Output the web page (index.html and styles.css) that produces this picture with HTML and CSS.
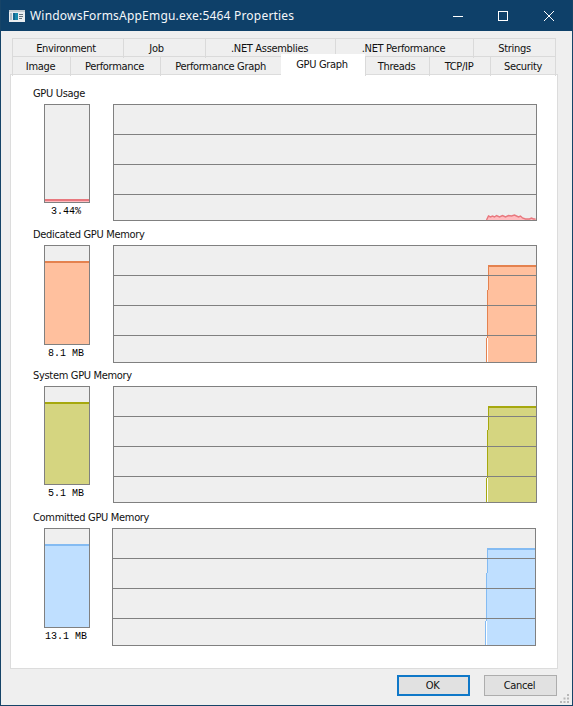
FILE: index.html
```
<!DOCTYPE html>
<html lang="en">
<head>
<meta charset="utf-8">
<title>WindowsFormsAppEmgu.exe:5464 Properties</title>
<link rel="stylesheet" href="styles.css">
</head>
<body>
<div class="window">
  <header class="titlebar">
    <svg class="app-icon" width="16" height="12" viewBox="0 0 16 12">
      <rect width="16" height="12" fill="#e9edf0"/><rect width="16" height="2" fill="#c3cbd0"/>
      <rect x="1" y="3" width="2" height="7" fill="#b4c0c8"/>
      <rect x="4" y="3" width="5" height="7" fill="#1788ac"/><rect x="4" y="3" width="2" height="7" fill="#13658f"/>
      <path d="M10 4.5h4M10 6.5h4M10 8.5h3" stroke="#66747d"/>
    </svg>
    <h1>WindowsFormsAppEmgu.exe:5464 Properties</h1>
    <svg class="controls" width="102" height="12" viewBox="0 0 102 12" fill="none" stroke="#fff">
      <path d="M0 6.500h10"/><rect x="45.500" y="1.500" width="9" height="9"/><path d="M91 1l10 10M101 1l-10 10"/>
    </svg>
  </header>
  <nav class="tabs">
    <div class="row upper"><span>Environment</span><span>Job</span><span>.NET Assemblies</span><span>.NET Performance</span><span>Strings</span></div>
    <div class="row lower"><span>Image</span><span>Performance</span><span>Performance Graph</span><span class="active">GPU Graph</span><span>Threads</span><span>TCP/IP</span><span>Security</span></div>
  </nav>
  <main class="panel">
    <section class="usage">
      <h2>GPU Usage</h2>
      <div class="gauge"><div class="meter"><i></i></div><p>3.44%</p></div>
      <svg class="graph" width="424" height="117" viewBox="0 0 424 117">
        <rect class="frame" x=".5" y=".5" width="423" height="116"/>
        <path class="fill" d="M374 116v-3l2-1h30l6 3h11v1z"/>
        <path class="grid" d="M1 30.5h422M1 60.5h422M1 90.5h422"/>
        <path class="line" d="M373.5 116l2-4 2 1 2-1 2 1 2-1.500 3 1.500 3-1.500 3 1.500 3-1.500 3 .5 3-1 4 2 2-1 2 2 3 1h4l2-1 2 1h2"/>
      </svg>
    </section>
    <section class="dedicated">
      <h2>Dedicated GPU Memory</h2>
      <div class="gauge tall"><div class="meter"><i></i></div><p>8.1 MB</p></div>
      <svg class="graph" width="424" height="118" viewBox="0 0 424 118">
        <rect class="frame" x=".5" y=".5" width="423" height="117"/>
        <path class="fill" d="M375 20h48v97h-48z"/><path class="gap" d="M374.500 93v24"/>
        <path class="edge" d="M375.500 20v25M374.500 45v48M373.500 93v24"/><path class="line" d="M375 21h48"/>
        <path class="grid" d="M1 30.5h422M1 60.5h422M1 90.5h422"/>
      </svg>
    </section>
    <section class="system">
      <h2>System GPU Memory</h2>
      <div class="gauge"><div class="meter"><i></i></div><p>5.1 MB</p></div>
      <svg class="graph" width="424" height="117" viewBox="0 0 424 117">
        <rect class="frame" x=".5" y=".5" width="423" height="116"/>
        <path class="fill" d="M375 20h48v96h-48z"/><path class="gap" d="M374.500 92v24"/>
        <path class="edge" d="M375.500 20v24M374.500 44v48M373.500 92v24"/><path class="line" d="M375 21h48"/>
        <path class="grid" d="M1 30.5h422M1 60.5h422M1 90.5h422"/>
      </svg>
    </section>
    <section class="committed">
      <h2>Committed GPU Memory</h2>
      <div class="gauge tall"><div class="meter"><i></i></div><p>13.1 MB</p></div>
      <svg class="graph" width="424" height="118" viewBox="0 0 424 118">
        <rect class="frame" x=".5" y=".5" width="423" height="117"/>
        <path class="fill" d="M375 20h48v97h-48z"/><path class="gap" d="M374.500 93v24"/>
        <path class="edge" d="M375.500 20v25M374.500 45v48M373.500 93v24"/><path class="line" d="M375 21h48"/>
        <path class="grid" d="M1 30.5h422M1 60.5h422M1 90.5h422"/>
      </svg>
    </section>
  </main>
  <footer>
    <button class="primary">OK</button><button>Cancel</button>
    <svg class="grip" width="9" height="9" viewBox="0 0 9 9"><path fill="#b8b8b8" d="M7 0h2v2h-2zM3.500 3.500h2v2h-2zM7 3.500h2v2h-2zM0 7h2v2h-2zM3.500 7h2v2h-2zM7 7h2v2h-2z"/></svg>
  </footer>
</div>
</body>
</html>
```
FILE: styles.css
```
* { box-sizing: border-box; }
body { margin: 0; font: 11px/16px "DejaVu Sans Condensed", "DejaVu Sans", sans-serif; font-stretch: condensed; letter-spacing: -.32px; color: #111; }
h1, h2, p { margin: 0; font-weight: normal; }
svg { display: block; }
.window { width: 573px; height: 706px; background: #efefef; border: 1px solid #164468; border-top: 0; overflow: hidden; }
.titlebar { height: 31px; margin: 0 -1px; padding: 0 18px 0 9px; display: flex; align-items: center; background: #0e4069; }
.titlebar h1 { margin-left: 5px; font: 12px/20px "Noto Sans", sans-serif; letter-spacing: .2px; color: #f4f7fa; white-space: nowrap; }
.controls { margin-left: auto; }
.tabs { margin: 7px 0 0 11px; width: 544px; }
.row { display: grid; height: 18px; }
.row span { padding-right: 2px; border: 1px solid #dadada; border-width: 1px 0 0 1px; line-height: 19px; text-align: center; white-space: nowrap; }
.row span:last-child { border-right-width: 1px; padding-right: 0; }
.upper { grid-template-columns: 111px 82px 130px 138px 83px; }
.upper span:nth-child(1) { padding-right: 4px; }
.upper span:nth-child(2) { padding-right: 16px; }
.lower { grid-template-columns: 58px 90px 121px 84px 64px 61px 66px; }
.lower span:nth-child(3) { padding-right: 0; }
.lower span:nth-child(3) { text-indent: -1px; }
.lower span.active { background: #fff; height: 21px; margin-top: -2px; border-color: #fff; z-index: 1; line-height: 19px; padding-right: 3px; }
.panel { width: 548px; height: 595px; margin-left: 9px; padding: 12px 0 0 22px; background: #fff; border: 1px solid #dcdcdc; }
section { height: 141px; display: grid; grid-template: 17px 1fr / 80px 424px; }
section h2 { grid-column: 1 / 3; font-size: 11px; line-height: 14px; }
.system { height: 142px; }
.gauge { margin-left: 11px; width: 46px; }
.meter { height: 99px; display: flex; align-items: flex-end; background: #efefef; border: 1px solid #808080; }
.tall .meter { height: 100px; }
.meter i { width: 44px; height: 83px; border-top: 2px solid; }
.usage .meter i { height: 3px; }
.system .meter i { height: 82px; }
.gauge p { margin: 1px -6px 0 -8px; font: 10px/16px "Liberation Mono", monospace; letter-spacing: 0; text-align: center; color: #000; }
.committed .graph { margin-left: -1px; }
.usage { --line: #e8787e; --fill: #ffbcc0; }
.dedicated { --line: #e4824f; --fill: #ffc09e; }
.system { --line: #a6a80e; --fill: #d5d580; }
.committed { --line: #84bbf2; --fill: #bfdfff; }
.meter i { background: var(--fill); border-color: var(--line); }
.frame { fill: #efefef; stroke: #808080; }
.grid { stroke: #808080; }
.fill { fill: var(--fill); }
.line { stroke: var(--line); stroke-width: 2; fill: none; }
.usage .line { stroke-width: 1.4; }
.edge { stroke: var(--line); }
.gap { stroke: #fff; }
footer { display: flex; padding: 6px 0 0 396px; }
button { width: 73px; height: 21px; padding: 1px 2px 0 0; margin-right: 14px; font: inherit; letter-spacing: inherit; color: #111; background: #e1e1e1; border: 1px solid #adadad; }
button.primary { border: 2px solid #0f78c8; }
button + button { margin-right: 3px; }
.grip { margin-top: 19px; }
```
